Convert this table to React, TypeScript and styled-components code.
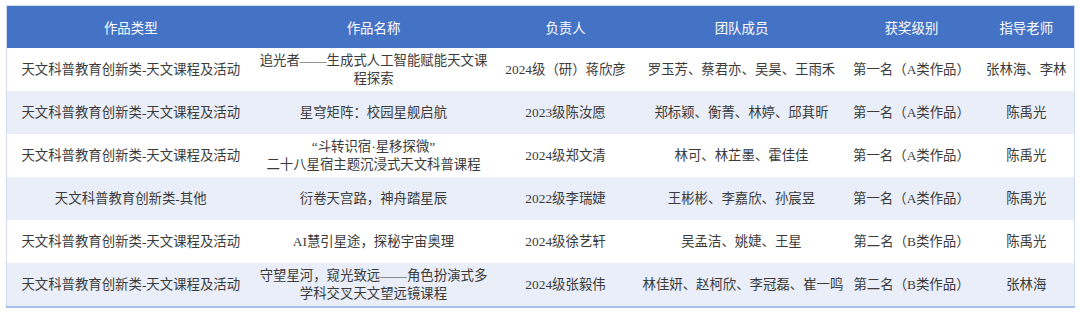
import React from 'react'
import styled, {createGlobalStyle} from 'styled-components'

type Award = {
  category: string
  title: React.ReactNode
  leader: string
  members: string
  level: string
  teacher: string
}

const awards: Award[] = [
  {
    category: '天文科普教育创新类-天文课程及活动',
    title: '追光者——生成式人工智能赋能天文课程探索',
    leader: '2024级（研）蒋欣彦',
    members: '罗玉芳、蔡君亦、吴昊、王雨禾',
    level: '第一名（A类作品）',
    teacher: '张林海、李林',
  },
  {
    category: '天文科普教育创新类-天文课程及活动',
    title: '星穹矩阵：校园星舰启航',
    leader: '2023级陈汝愿',
    members: '郑标颖、衡菁、林婷、邱萁昕',
    level: '第一名（A类作品）',
    teacher: '陈禹光',
  },
  {
    category: '天文科普教育创新类-天文课程及活动',
    title: (
      <>
        “斗转识宿·星移探微”
        <br />
        二十八星宿主题沉浸式天文科普课程
      </>
    ),
    leader: '2024级郑文清',
    members: '林可、林芷墨、霍佳佳',
    level: '第一名（A类作品）',
    teacher: '陈禹光',
  },
  {
    category: '天文科普教育创新类-其他',
    title: '衍卷天宫路，神舟踏星辰',
    leader: '2022级李瑞婕',
    members: '王彬彬、李嘉欣、孙宸昱',
    level: '第一名（A类作品）',
    teacher: '陈禹光',
  },
  {
    category: '天文科普教育创新类-天文课程及活动',
    title: 'AI慧引星途，探秘宇宙奥理',
    leader: '2024级徐艺轩',
    members: '吴孟洁、姚婕、王星',
    level: '第二名（B类作品）',
    teacher: '陈禹光',
  },
  {
    category: '天文科普教育创新类-天文课程及活动',
    title: '守望星河，窥光致远——角色扮演式多学科交叉天文望远镜课程',
    leader: '2024级张毅伟',
    members: '林佳妍、赵柯欣、李冠磊、崔一鸣',
    level: '第二名（B类作品）',
    teacher: '张林海',
  },
]

const columns = [
  {label: '作品类型', width: 248},
  {label: '作品名称', width: 238},
  {label: '负责人', width: 146},
  {label: '团队成员', width: 206},
  {label: '获奖级别', width: 134},
  {label: '指导老师', width: 96},
]

const GlobalStyle = createGlobalStyle`
  body {
    margin: 0;
    background: #ffffff;
    font-family: "Liberation Serif", "Noto Sans CJK SC", serif;
  }
`

const Page = styled.div`
  padding: 5px 6px;
`

const Table = styled.table`
  width: 1068px;
  table-layout: fixed;
  border-collapse: collapse;
  border-top: 1px solid #d3dcee;
  border-left: 1px solid #d3dcee;
  border-right: 1px solid #d3dcee;
  border-bottom: 2px solid #a9c1e8;
`

const HeadCell = styled.th`
  height: 42px;
  padding: 0 4px;
  background: #4472c4;
  color: #ffffff;
  font-size: 13.4px;
  font-weight: normal;
  text-align: center;
  vertical-align: middle;
`

const Row = styled.tr<{$band: boolean}>`
  background: ${(p) => (p.$band ? '#e9eef8' : '#ffffff')};
`

const Cell = styled.td<{$wrap?: boolean}>`
  height: 43px;
  padding: 0 4px;
  color: #3b3b3b;
  font-size: 13.4px;
  line-height: 18px;
  text-align: center;
  vertical-align: middle;
  white-space: ${(p) => (p.$wrap ? 'normal' : 'nowrap')};
`

export default function App() {
  return (
    <Page>
      <GlobalStyle />
      <Table>
        <colgroup>
          {columns.map((c) => (
            <col key={c.label} style={{width: c.width}} />
          ))}
        </colgroup>
        <thead>
          <tr>
            {columns.map((c) => (
              <HeadCell key={c.label}>{c.label}</HeadCell>
            ))}
          </tr>
        </thead>
        <tbody>
          {awards.map((item, index) => (
            <Row key={index} $band={index % 2 === 1}>
              <Cell>{item.category}</Cell>
              <Cell $wrap>{item.title}</Cell>
              <Cell>{item.leader}</Cell>
              <Cell>{item.members}</Cell>
              <Cell>{item.level}</Cell>
              <Cell>{item.teacher}</Cell>
            </Row>
          ))}
        </tbody>
      </Table>
    </Page>
  )
}
